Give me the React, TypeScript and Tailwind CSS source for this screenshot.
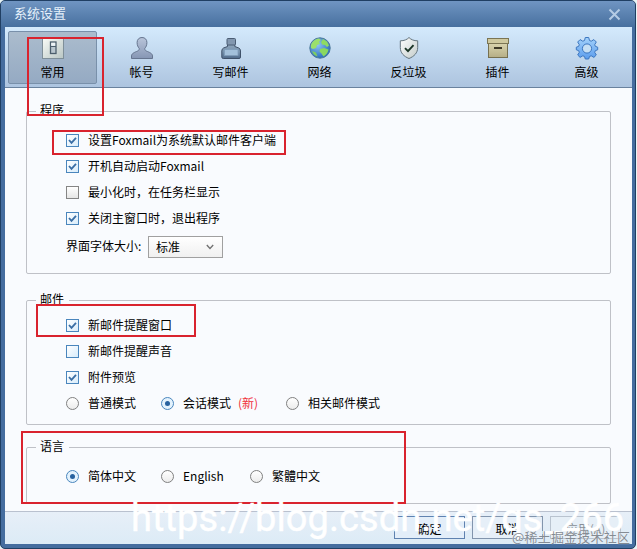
import React from 'react';

interface TabItem {
  label: string;
  icon: React.ReactNode;
}

const SwitchIcon = () => (
  <svg width="24" height="24" viewBox="0 0 24 24" fill="none">
    <defs>
      <linearGradient id="sw" x1="0" y1="0" x2="1" y2="1">
        <stop offset="0" stopColor="#fafcf8" />
        <stop offset="1" stopColor="#b9c6c4" />
      </linearGradient>
    </defs>
    <rect x="1.5" y="1.5" width="21" height="21" fill="url(#sw)" stroke="#7f8f99" />
    <rect x="9.500" y="6" width="5.500" height="11.500" fill="#b9c6ce" stroke="#4c5e6c" strokeWidth="1.300" />
    <path d="M10 10.500h5" stroke="#4c5e6c" />
    <rect x="10.200" y="6.800" width="4" height="3" fill="#eef4f6" />
  </svg>
);

const UserIcon = () => (
  <svg width="24" height="24" viewBox="0 0 24 24">
    <defs>
      <linearGradient id="us" x1="0" y1="0" x2="0" y2="1">
        <stop offset="0" stopColor="#b9c5da" />
        <stop offset="1" stopColor="#8696b4" />
      </linearGradient>
    </defs>
    <path
      d="M12 1.500c-3 0-4.900 2-4.900 5 0 2.600.9 4.600 2.100 5.900 0 1.500-.4 2.100-1.700 2.700C4.500 16.300 1.500 17.500 1.500 20v2.500h21V20c0-2.500-3-3.700-6-4.900-1.300-.6-1.700-1.200-1.700-2.700 1.200-1.300 2.100-3.300 2.100-5.900 0-3-1.900-5-4.900-5z"
      fill="url(#us)"
      stroke="#66758f"
    />
  </svg>
);

const InkIcon = () => (
  <svg width="24" height="24" viewBox="0 0 24 24">
    <defs>
      <linearGradient id="ink" x1="0" y1="0" x2="0" y2="1">
        <stop offset="0" stopColor="#8da4ba" />
        <stop offset=".5" stopColor="#7994ae" />
        <stop offset="1" stopColor="#506a8a" />
      </linearGradient>
    </defs>
    <path
      d="M8.500 8.500v2L4.500 12q-1.700.8-1.700 3v6q0 1.500 1.500 1.500h15.700q1.500 0 1.500-1.500v-6q0-2.200-1.700-3l-4-1.500v-2z"
      fill="url(#ink)"
      stroke="#3f5169"
    />
    <rect x="8" y="2.500" width="8.500" height="6.500" rx="1" fill="#8297af" stroke="#4b5d74" />
    <rect x="5.500" y="13.500" width="13.500" height="6" fill="#a3c0da" stroke="#7f9cb8" strokeWidth=".8" />
  </svg>
);

const GlobeIcon = () => (
  <svg width="24" height="24" viewBox="0 0 24 24">
    <defs>
      <radialGradient id="gl" cx=".4" cy=".35" r=".7">
        <stop offset="0" stopColor="#8cc4f4" />
        <stop offset="1" stopColor="#2868b8" />
      </radialGradient>
    </defs>
    <circle cx="12" cy="12" r="10.200" fill="url(#gl)" stroke="#4a7899" />
    <path d="M3 9c1-3 4-6 8-6.500l2 1.500-2 2 1 2-3 1-1 3-3 1-2-1z" fill="#9be06b" />
    <path d="M15 3l4 2.500 2 4-2 1.500-2-2-3-.5-1-2.500z" fill="#8fdb62" />
    <path d="M12 13l4-1 4.500 1.500c-.5 3-2 5-5 7l-2-3-2-2z" fill="#8ad85e" />
    <path d="M4 15l4 1.500 1.500 4C7 20 5 18 4 15z" fill="#7fcd60" />
  </svg>
);

const ShieldIcon = () => (
  <svg width="24" height="24" viewBox="0 0 24 24">
    <defs>
      <linearGradient id="sh" x1="0" y1="0" x2="1" y2="1">
        <stop offset="0" stopColor="#ffffff" />
        <stop offset="1" stopColor="#c2cbc9" />
      </linearGradient>
    </defs>
    <path
      d="M12 1.500c2 2.200 5 3.300 8.700 3.300v6.700c0 5.500-3.700 9-8.700 11-5-2-8.700-5.500-8.700-11V4.800C7 4.800 10 3.700 12 1.500z"
      fill="url(#sh)"
      stroke="#64747d"
    />
    <path d="M8 12.200l3 3 5.500-6" fill="none" stroke="#1b3526" strokeWidth="1.900" />
  </svg>
);

const BoxIcon = () => (
  <svg width="24" height="24" viewBox="0 0 24 24">
    <defs>
      <linearGradient id="bx" x1="0" y1="0" x2="0" y2="1">
        <stop offset="0" stopColor="#d9d4ae" />
        <stop offset="1" stopColor="#b5ae86" />
      </linearGradient>
    </defs>
    <rect x="2.500" y="7" width="19" height="14.500" fill="url(#bx)" stroke="#76704f" />
    <rect x="1.500" y="2.500" width="21" height="5" fill="#cfc99f" stroke="#7b7554" />
    <rect x="8" y="11" width="8" height="2" fill="#3e3a28" />
  </svg>
);

const GearIcon = () => (
  <svg width="24" height="24" viewBox="0 0 24 24">
    <defs>
      <linearGradient id="ge" x1="0" y1="0" x2="0" y2="1">
        <stop offset="0" stopColor="#a4d2fb" />
        <stop offset="1" stopColor="#5b9ced" />
      </linearGradient>
    </defs>
    <path
      d="M10.300 1.500h3.400l.8 3 1.700.7 2.700-1.600 2.400 2.400-1.600 2.700.7 1.700 2.300.8v2.600l-2.300.8-.7 1.700 1.600 2.700-2.400 2.400-2.700-1.600-1.700.7-.8 2.500h-3.400l-.8-2.500-1.700-.7-2.700 1.600-2.400-2.400 1.600-2.700-.7-1.700-2.300-.8v-2.600l2.300-.8.7-1.700-1.600-2.700 2.400-2.400 2.700 1.600 1.700-.7z"
      fill="url(#ge)"
      stroke="#3c76bf"
      strokeLinejoin="round"
    />
    <circle cx="12" cy="12.500" r="4.600" fill="#c6dff4" stroke="#3c76bf" />
  </svg>
);

const tabs: TabItem[] = [
  { label: '常用', icon: <SwitchIcon /> },
  { label: '帐号', icon: <UserIcon /> },
  { label: '写邮件', icon: <InkIcon /> },
  { label: '网络', icon: <GlobeIcon /> },
  { label: '反垃圾', icon: <ShieldIcon /> },
  { label: '插件', icon: <BoxIcon /> },
  { label: '高级', icon: <GearIcon /> },
];

const Check = ({ label, checked = false, blue = false }: { label: string; checked?: boolean; blue?: boolean }) => (
  <label className="flex h-[13px] items-center gap-[9px]">
    <span
      className={`flex size-[13px] shrink-0 items-center justify-center border ${
        checked || blue
          ? 'border-[#4a86bd] bg-linear-to-br from-white to-[#d8ecfb]'
          : 'border-[#858585] bg-linear-to-b from-white to-[#e6e6e6]'
      }`}
    >
      {checked && (
        <svg width="11" height="11" viewBox="0 0 11 11" fill="none" stroke="#3a6ea5" strokeWidth="1.800">
          <path d="M2 5l2.500 2.800L9 2.800" />
        </svg>
      )}
    </span>
    <span className="pb-px whitespace-nowrap">{label}</span>
  </label>
);

const Radio = ({
  label,
  checked = false,
  width,
  extra,
}: {
  label: string;
  checked?: boolean;
  width: string;
  extra?: string;
}) => (
  <label className={`flex h-[13px] items-center gap-[9px] ${width}`}>
    <span
      className={`flex size-[13px] shrink-0 items-center justify-center rounded-full border ${
        checked ? 'border-[#4a86bd] bg-[#e3f2fd]' : 'border-[#808080] bg-linear-to-b from-white to-[#ececec]'
      }`}
    >
      {checked && <span className="size-[5px] rounded-full bg-[#27619f]" />}
    </span>
    <span className="pb-px whitespace-nowrap">
      {label}
      {extra && <span className="ml-[7px] text-[#f0303c]">{extra}</span>}
    </span>
  </label>
);

const Group = ({
  title,
  className,
  clip,
  children,
}: {
  title: string;
  className: string;
  clip: string;
  children: React.ReactNode;
}) => (
  <fieldset className={`rounded-[2px] border border-[#bfc1c7] pl-[39px] ${className}`}>
    <legend className="-ml-[30px] h-4 pr-[5px] pl-1">
      <span className={`block overflow-hidden ${clip}`}>{title}</span>
    </legend>
    {children}
  </fieldset>
);

const DialogButton = ({ label, className }: { label: string; className: string }) => (
  <button className={`flex h-[23px] w-[71px] items-center justify-center border pt-0.5 ${className}`}>{label}</button>
);

// Красные рамки поверх окна
const marks = [
  'left-[27px] top-[37px] h-[79px] w-[77px]',
  'left-[52px] top-[130px] h-[25px] w-[234px]',
  'left-[36px] top-[304px] h-[33px] w-[160px]',
  'left-[21px] top-[431px] h-[73px] w-[385px]',
];

export default function App() {
  return (
    <div className="relative h-[549px] w-[637px] overflow-hidden bg-[#e8f4f6] font-['Noto_Sans_CJK_SC',sans-serif] text-[12px] text-black">
      <div className="flex h-[549px] w-[636px] flex-col rounded-[5px] border border-[#203f63] bg-[#456d9f] pr-[3px] pb-1 pl-1">
        <header className="-mr-[3px] -ml-1 flex h-[26px] shrink-0 items-center justify-between rounded-t-[4px] bg-linear-to-b from-[#7095c2] to-[#47709f] pr-[14px] pl-[13px] text-[13px] text-[#e6f1fb]">
          <span className="pb-0.5">系统设置</span>
          <svg width="13" height="13" viewBox="0 0 13 13" stroke="#b5cce5" strokeWidth="2">
            <path d="M1.500 1.500l10 10M11.500 1.500l-10 10" />
          </svg>
        </header>

        <nav className="flex h-[61px] shrink-0 border-b border-[#6a829e] bg-linear-to-b from-[#d4eafc] to-[#adc4df] pt-1 pl-[3px]">
          {tabs.map((tab, i) => (
            <div
              key={tab.label}
              className={`flex h-[53px] w-[89px] shrink-0 flex-col items-center rounded-[2px] border pt-1 ${
                i === 0 ? 'border-[#7990aa] bg-linear-to-b from-[#abbccd] to-[#95aac3]' : 'border-transparent'
              }`}
            >
              {tab.icon}
              <span className="mt-1 leading-4">{tab.label}</span>
            </div>
          ))}
        </nav>

        <main className="h-[423px] shrink-0 bg-[#f9fbfe] pt-[15px] pr-[21px] pl-[21px]">
          <Group title="程序" className="h-[171px]" clip="h-3 leading-[14px]">
            <div className="flex flex-col gap-[13px] pt-[15px]">
              <Check label="设置Foxmail为系统默认邮件客户端" checked />
              <Check label="开机自动启动Foxmail" checked />
              <Check label="最小化时，在任务栏显示" />
              <Check label="关闭主窗口时，退出程序" checked />
            </div>
            <div className="mt-[11px] flex items-center gap-[7px]">
              <span className="w-[75px] pb-0.5 whitespace-nowrap">界面字体大小:</span>
              <div className="flex h-[22px] w-[75px] items-center justify-between border border-[#a0a0a0] bg-linear-to-b from-white to-[#f0f0f0] pr-2 pl-[7px]">
                <span>标准</span>
                <svg width="8" height="6" viewBox="0 0 8 6" fill="none" stroke="#707070" strokeWidth="1.300">
                  <path d="M.8 1L4 4.500 7.200 1" />
                </svg>
              </div>
            </div>
          </Group>

          <Group title="邮件" className="mt-[18px] h-[133px]" clip="h-3 leading-[14px]">
            <div className="flex flex-col gap-[13px] pt-[11px]">
              <Check label="新邮件提醒窗口" checked />
              <Check label="新邮件提醒声音" blue />
              <Check label="附件预览" checked />
              <div className="flex">
                <Radio label="普通模式" width="w-[95px]" />
                <Radio label="会话模式" extra="(新)" width="w-[125px]" checked />
                <Radio label="相关邮件模式" width="w-[120px]" />
              </div>
            </div>
          </Group>

          <Group title="语言" className="mt-[14px] h-[65px]" clip="h-4 leading-[14px]">
            <div className="flex pt-[15px]">
              <Radio label="简体中文" width="w-[95px]" checked />
              <Radio label="English" width="w-[89px]" />
              <Radio label="繁體中文" width="w-[95px]" />
            </div>
          </Group>
        </main>

        <footer className="flex flex-1 justify-end gap-[7px] border-t border-[#b9c1cf] bg-linear-to-b from-[#e7eff8] to-[#dcebf6] pt-1 pr-[11px]">
          <DialogButton label="确定" className="border-[#5f82b0] bg-[#e3eef9]" />
          <DialogButton label="取消" className="border-[#8295ad] bg-[#e6eff8]" />
          <DialogButton label="应用(A)" className="border-[#b9c3cf] bg-[#e6eff7] text-[#8a8f96]" />
        </footer>
      </div>

      {marks.map((pos) => (
        <div key={pos} className={`pointer-events-none absolute border-2 border-[#d9232e] ${pos}`} />
      ))}

      <div className="pointer-events-none absolute top-[495px] left-[131px] font-['Roboto',sans-serif] text-[38px] leading-[46px] tracking-[0.1px] whitespace-nowrap text-white [-webkit-text-stroke:0.4px_white]">
        https://blog.csdn.net/qs_266
      </div>
      <div className="pointer-events-none absolute top-[529px] left-[512px] text-[13px] leading-4 tracking-[0.2px] whitespace-nowrap text-[#858c94] [text-shadow:0_0_1px_#fff]">
        @稀土掘金技术社区
      </div>
    </div>
  );
}
